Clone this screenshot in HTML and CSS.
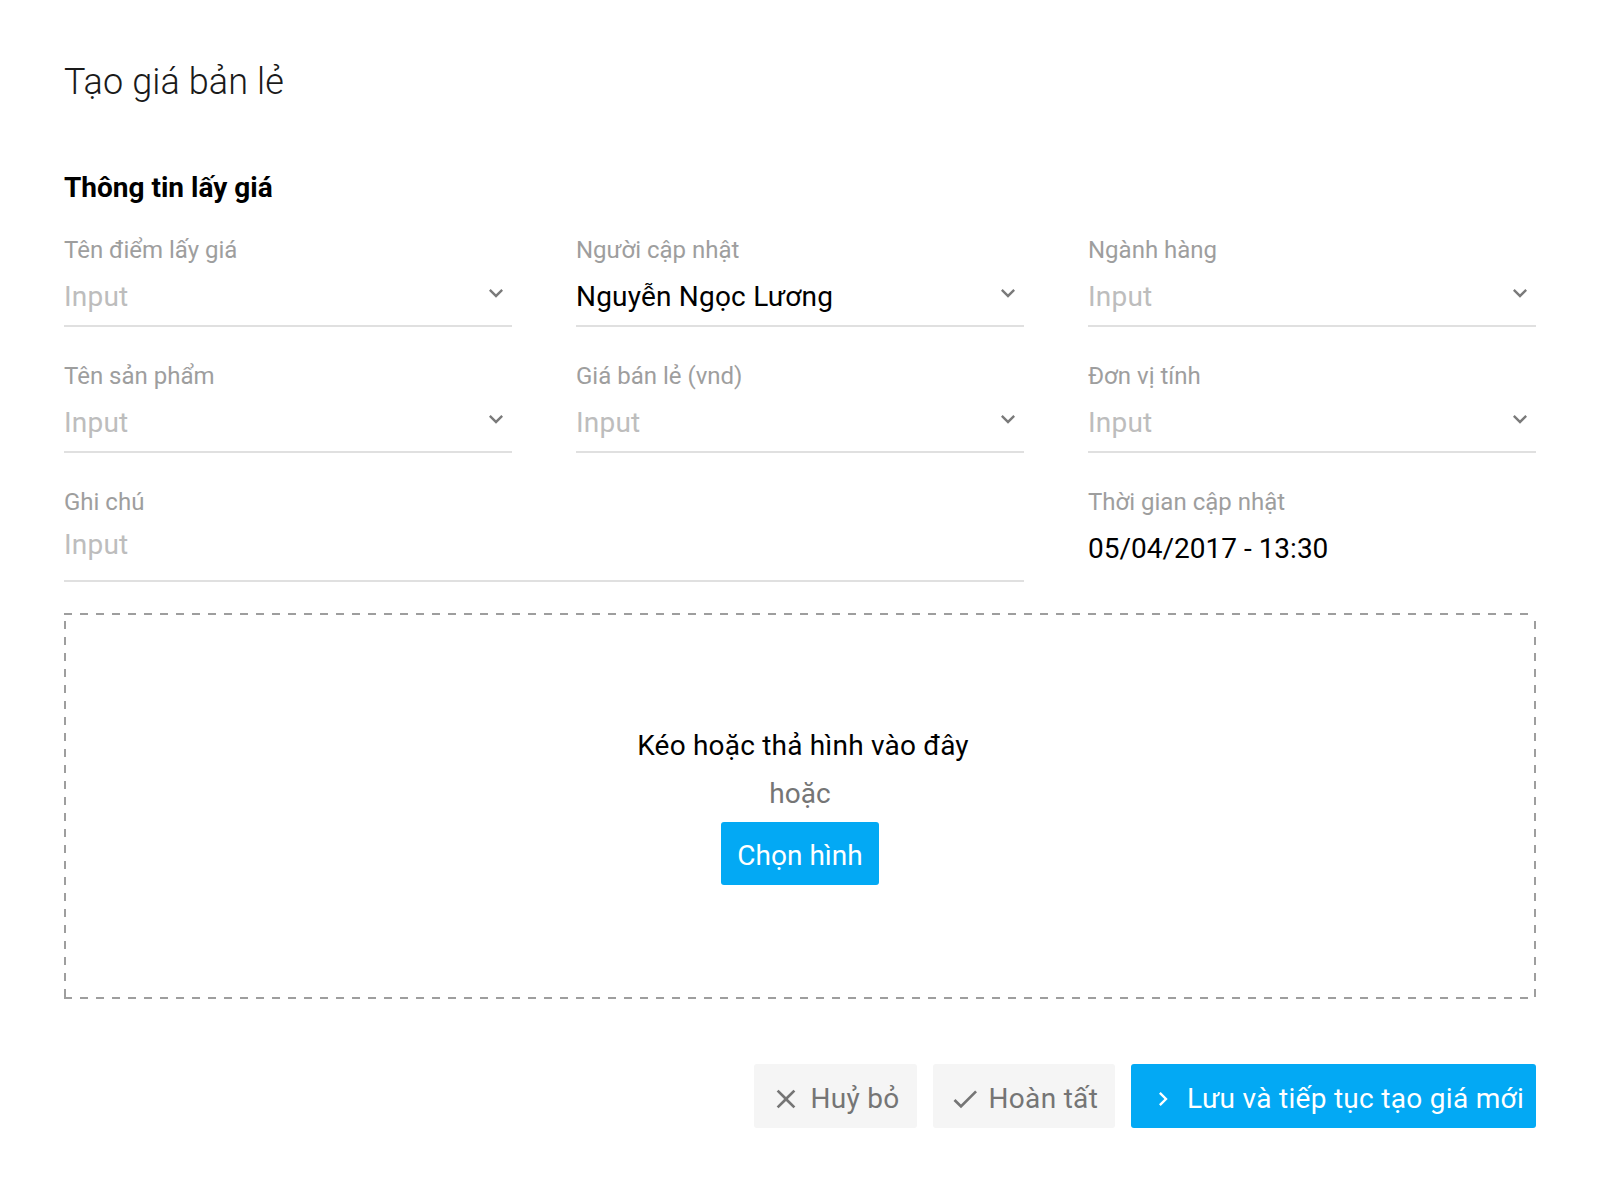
FILE: index.html
```html
<!DOCTYPE html>
<html lang="vi">
<head>
<meta charset="utf-8">
<title>Tạo giá bản lẻ</title>
<link rel="stylesheet" href="styles.css">
</head>
<body>
<div class="page">
  <h1 class="title">Tạo giá bản lẻ</h1>
  <h2 class="section">Thông tin lấy giá</h2>

  <div class="grid">
    <div class="field">
      <div class="label">Tên điểm lấy giá</div>
      <div class="control">
        <span class="value placeholder">Input</span>
        <svg class="chev" viewBox="0 0 24 24"><path d="M16.59 8.59L12 13.17 7.41 8.59 6 10l6 6 6-6z"/></svg>
      </div>
    </div>
    <div class="field">
      <div class="label">Người cập nhật</div>
      <div class="control">
        <span class="value">Nguyễn Ngọc Lương</span>
        <svg class="chev" viewBox="0 0 24 24"><path d="M16.59 8.59L12 13.17 7.41 8.59 6 10l6 6 6-6z"/></svg>
      </div>
    </div>
    <div class="field">
      <div class="label">Ngành hàng</div>
      <div class="control">
        <span class="value placeholder">Input</span>
        <svg class="chev" viewBox="0 0 24 24"><path d="M16.59 8.59L12 13.17 7.41 8.59 6 10l6 6 6-6z"/></svg>
      </div>
    </div>

    <div class="field">
      <div class="label">Tên sản phẩm</div>
      <div class="control">
        <span class="value placeholder">Input</span>
        <svg class="chev" viewBox="0 0 24 24"><path d="M16.59 8.59L12 13.17 7.41 8.59 6 10l6 6 6-6z"/></svg>
      </div>
    </div>
    <div class="field">
      <div class="label">Giá bán lẻ (vnd)</div>
      <div class="control">
        <span class="value placeholder">Input</span>
        <svg class="chev" viewBox="0 0 24 24"><path d="M16.59 8.59L12 13.17 7.41 8.59 6 10l6 6 6-6z"/></svg>
      </div>
    </div>
    <div class="field">
      <div class="label">Đơn vị tính</div>
      <div class="control">
        <span class="value placeholder">Input</span>
        <svg class="chev" viewBox="0 0 24 24"><path d="M16.59 8.59L12 13.17 7.41 8.59 6 10l6 6 6-6z"/></svg>
      </div>
    </div>

    <div class="field note">
      <div class="label">Ghi chú</div>
      <div class="control">
        <span class="value placeholder">Input</span>
      </div>
    </div>
    <div class="field date">
      <div class="label">Thời gian cập nhật</div>
      <div class="date-value">05/04/2017 - 13:30</div>
    </div>
  </div>

  <div class="dropzone">
    <div class="dz-title">Kéo hoặc thả hình vào đây</div>
    <div class="dz-or">hoặc</div>
    <button class="btn btn-primary dz-btn" type="button">Chọn hình</button>
  </div>

  <div class="actions">
    <button class="btn btn-light" type="button">
      <svg class="icon" viewBox="0 0 24 24"><path d="M19 6.41L17.59 5 12 10.59 6.41 5 5 6.41 10.59 12 5 17.59 6.41 19 12 13.41 17.59 19 19 17.59 13.41 12z"/></svg>
      <span>Huỷ bỏ</span>
    </button>
    <button class="btn btn-light" type="button">
      <svg class="icon" viewBox="0 0 24 24"><path d="M9 16.17L4.83 12l-1.42 1.41L9 19 21 7l-1.41-1.41z"/></svg>
      <span>Hoàn tất</span>
    </button>
    <button class="btn btn-primary btn-save" type="button">
      <svg class="icon" viewBox="-1.714 -1.714 27.43 27.43"><path d="M10 6L8.59 7.41 13.17 12l-4.58 4.59L10 18l6-6z"/></svg>
      <span>Lưu và tiếp tục tạo giá mới</span>
    </button>
  </div>
</div>
</body>
</html>
```

FILE: styles.css
```css
* {
  box-sizing: border-box;
}

body {
  margin: 0;
  background: #ffffff;
  font-family: Roboto, "Noto Sans", "Liberation Sans", sans-serif;
  color: #000000;
}

.page {
  padding: 58px 64px 0;
}

.title {
  margin: 0;
  font-size: 36px;
  font-weight: 300;
  line-height: 48px;
  letter-spacing: 0.1px;
  color: #1a1a1a;
}

.section {
  margin: 66px 0 0;
  font-size: 28px;
  font-weight: 700;
  line-height: 32px;
  color: #000000;
}

.grid {
  margin-top: 30px;
  display: grid;
  grid-template-columns: repeat(3, 1fr);
  column-gap: 64px;
  row-gap: 33px;
}

.label {
  font-size: 24px;
  line-height: 32px;
  color: #9e9e9e;
}

.control {
  display: flex;
  align-items: flex-start;
  margin-top: 15px;
  padding-bottom: 12px;
  border-bottom: 2px solid #e0e0e0;
}

.value {
  flex: 1;
  font-size: 28px;
  line-height: 32px;
  letter-spacing: 0.2px;
  color: #000000;
}

.placeholder {
  color: #bdbdbd;
}

.chev {
  width: 28px;
  height: 28px;
  margin-top: -2px;
  margin-right: 2px;
  fill: #7a7a7a;
  flex: none;
}

.note {
  grid-column: span 2;
}

.note .control {
  margin-top: 11px;
  padding-bottom: 19px;
}

.date-value {
  margin-top: 15px;
  font-size: 28px;
  line-height: 32px;
  color: #000000;
}

.dropzone {
  margin-top: 31px;
  height: 386px;
  display: flex;
  flex-direction: column;
  align-items: center;
  justify-content: center;
  padding-bottom: 6px;
  background-image:
    linear-gradient(to right, #9e9e9e 50%, transparent 50%),
    linear-gradient(to right, #9e9e9e 50%, transparent 50%),
    linear-gradient(to bottom, #9e9e9e 50%, transparent 50%),
    linear-gradient(to bottom, #9e9e9e 50%, transparent 50%);
  background-size: 16px 2px, 16px 2px, 2px 16px, 2px 16px;
  background-position: 0 0, 0 100%, 0 8px, 100% 8px;
  background-repeat: repeat-x, repeat-x, repeat-y, repeat-y;
}

.dz-title {
  padding-left: 6px;
  font-size: 28px;
  line-height: 48px;
  letter-spacing: 0.2px;
  color: #000000;
}

.dz-or {
  font-size: 28px;
  line-height: 48px;
  color: #757575;
}

.btn {
  height: 64px;
  padding: 6px 16px 0;
  display: inline-flex;
  align-items: center;
  gap: 8px;
  border: 0;
  border-radius: 3px;
  font-family: Roboto, "Noto Sans", "Liberation Sans", sans-serif;
  font-size: 28px;
  line-height: 32px;
  cursor: pointer;
}

.btn-primary {
  background: #03a9f4;
  color: #ffffff;
}

.btn-primary .icon {
  fill: #ffffff;
}

.btn-light {
  background: #f5f5f5;
  color: #757575;
  padding-right: 17px;
}

.btn-light .icon {
  fill: #757575;
}

.actions .btn {
  letter-spacing: 0.3px;
}

.btn-save {
  padding-right: 12px;
}

.icon {
  width: 32px;
  height: 32px;
  flex: none;
}

.dz-btn {
  margin-top: 4px;
  height: 63px;
}

.actions {
  margin-top: 65px;
  display: flex;
  justify-content: flex-end;
  gap: 16px;
}
```
